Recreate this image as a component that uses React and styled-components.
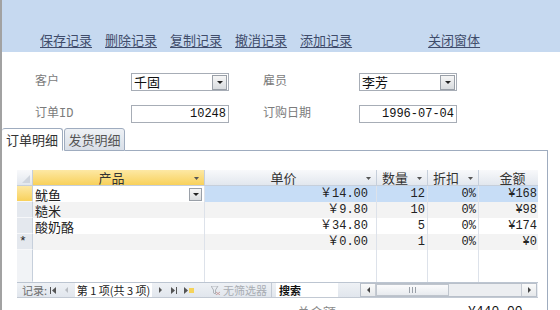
import React from 'react';
import styled, { createGlobalStyle } from 'styled-components';

const CJK = `"Noto Sans CJK SC", "Noto Sans", sans-serif`;
const MONO = `"Liberation Mono", "Noto Sans CJK SC", monospace`;

const GlobalStyle = createGlobalStyle`
  html, body { margin: 0; padding: 0; background: #fff; }
  body { font-family: ${CJK}; }
`;

const Page = styled.div`
  width: 560px;
  height: 310px;
  overflow: hidden;
  box-sizing: border-box;
  border-left: 2px solid #a2a2a2;
  display: flex;
  flex-direction: column;
`;

const Header = styled.div`
  flex: none;
  height: 52px;
  box-sizing: border-box;
  background: #c6d9f0;
  display: flex;
  align-items: flex-end;
  gap: 13px;
  padding: 0 0 4px 38px;
`;

const HeaderLink = styled.a`
  font-family: ${CJK};
  font-size: 13px;
  line-height: 16px;
  color: #3f4c6b;
  text-decoration: underline;
  text-underline-offset: 2px;
  margin-left: ${(p) => (p.$push ? '63px' : '0')};
  cursor: pointer;
`;

const Form = styled.div`
  display: grid;
  grid-template-columns: 96px 132px 96px 98px;
  grid-auto-rows: 18px;
  row-gap: 14px;
  align-items: center;
  padding: 21px 0 0 33px;
`;

const Label = styled.div`
  font-family: ${MONO};
  font-size: 12px;
  line-height: 16px;
  color: #7b7b7b;
`;

const Field = styled.div`
  width: 98px;
  height: 18px;
  box-sizing: border-box;
  border: 1px solid #a7adb6;
  background: #fff;
  display: flex;
  align-items: center;
  justify-content: ${(p) => (p.$right ? 'flex-end' : 'space-between')};
  padding: ${(p) => (p.$right ? '0 2px 0 0' : '0 0 0 2px')};
  font-family: ${(p) => (p.$right ? MONO : CJK)};
  font-size: ${(p) => (p.$right ? '12px' : '13px')};
  line-height: 16px;
  color: #111;
`;

const DropBtn = styled.span`
  width: 15px;
  height: 15px;
  box-sizing: border-box;
  margin-right: 1px;
  border: 1px solid #9aa0a8;
  background: linear-gradient(#f6f6f6, #d9dcdf);
  display: flex;
  align-items: center;
  justify-content: center;
`;

const TabStrip = styled.div`
  display: flex;
  align-items: flex-end;
  width: 546px;
  height: 23px;
  margin-top: 5px;
  flex: none;
`;

const Tab = styled.div`
  box-sizing: border-box;
  width: 61px;
  height: 23px;
  padding-top: 1px;
  border: 1px solid #9facbf;
  border-bottom: 1px solid ${(p) => (p.$active ? '#fff' : '#9facbf')};
  border-left: ${(p) => (p.$active ? 'none' : '1px solid #9facbf')};
  border-radius: 3px 3px 0 0;
  background: ${(p) => (p.$active ? '#fff' : 'linear-gradient(#eef1f5, #d9dfe8)')};
  font-family: ${CJK};
  font-size: 13px;
  line-height: 19px;
  color: ${(p) => (p.$active ? '#333' : '#555')};
  text-align: center;
  margin-right: ${(p) => (p.$active ? '1px' : '0')};
`;

const TabLine = styled.div`
  flex: 1;
  border-bottom: 1px solid #9facbf;
`;

const Panel = styled.div`
  flex: 1;
  width: 546px;
  box-sizing: border-box;
  border-right: 1px solid #9facbf;
  padding: 19px 0 0 15px;
`;

const Sheet = styled.div`
  width: 521px;
  overflow: hidden;
  display: flex;
  flex-direction: column;
`;

const Row = styled.div`
  display: grid;
  grid-template-columns: 16px 172px 172px 51px 51px 60px;
  width: 522px;
  height: ${(p) => p.$h || 16}px;
`;

const HeadCell = styled.div`
  position: relative;
  box-sizing: border-box;
  border-right: 1px solid #c6cfdb;
  border-bottom: 1px solid #c6cfdb;
  background: ${(p) =>
    p.$sel ? 'linear-gradient(#fde8a4, #f8d15b)' : 'linear-gradient(#f8f9fb, #e2e7ee)'};
  display: flex;
  align-items: center;
  justify-content: center;
  padding: 0 ${(p) => (p.$noArrow ? '0' : '14px')} 0 ${(p) => p.$pl || 0}px;
  font-family: ${CJK};
  font-size: 13px;
  line-height: 15px;
  color: #333;
  overflow: hidden;
`;

const SortArrow = styled.svg`
  position: absolute;
  right: 5px;
  top: 7px;
`;

const Selector = styled.div`
  box-sizing: border-box;
  border-right: 1px solid #c6cfdb;
  border-bottom: 1px solid ${(p) => (p.$blank ? 'transparent' : '#f6f7f9')};
  background: ${(p) =>
    p.$current ? 'linear-gradient(#fde8a4, #f8d15b)' : p.$blank ? '#f1f3f6' : '#e4e8ee'};
  font-family: ${MONO};
  font-size: 13px;
  line-height: 15px;
  color: #222;
  padding-left: 2px;
`;

const Cell = styled.div`
  box-sizing: border-box;
  border-right: 1px solid #dde2ea;
  background: ${(p) => p.$bg || '#fff'};
  display: flex;
  align-items: center;
  justify-content: ${(p) => (p.$num ? 'flex-end' : 'space-between')};
  padding: 0 ${(p) => (p.$pr !== undefined ? p.$pr : 2)}px 0 2px;
  font-family: ${(p) => (p.$num ? MONO : CJK)};
  font-size: ${(p) => (p.$num ? '12px' : '13px')};
  line-height: 15px;
  color: #222;
  white-space: nowrap;
  overflow: hidden;
`;

const CellDrop = styled.span`
  width: 13px;
  height: 13px;
  box-sizing: border-box;
  border: 1px solid #9aa0a8;
  background: linear-gradient(#f6f6f6, #d9dcdf);
  display: flex;
  align-items: center;
  justify-content: center;
`;

const NavBar = styled.div`
  display: flex;
  align-items: center;
  width: 521px;
  height: 16px;
  box-sizing: border-box;
  border-top: 1px solid #bcc5d1;
  border-bottom: 1px solid #c2c9d3;
  background: linear-gradient(#eef1f5, #e1e6ed);
  font-family: ${CJK};
  font-size: 11px;
  line-height: 14px;
  color: #6e6e6e;
`;

const NavLabel = styled.span`
  width: 31px;
  padding-left: 5px;
  box-sizing: border-box;
  white-space: nowrap;
  flex: none;
`;

const NavBtn = styled.span`
  width: ${(p) => p.$w}px;
  display: flex;
  justify-content: center;
  align-items: center;
  flex: none;
`;

const RecordBox = styled.span`
  width: 77px;
  height: 14px;
  background: #fff;
  color: #222;
  font-size: 11px;
  line-height: 14px;
  text-align: center;
  white-space: nowrap;
  flex: none;
`;

const FilterBox = styled.span`
  width: 67px;
  margin-left: 7px;
  height: 14px;
  display: flex;
  align-items: center;
  gap: 3px;
  padding-left: 6px;
  box-sizing: border-box;
  color: #a9adb3;
  border-right: 1px solid #c3cad4;
  white-space: nowrap;
  flex: none;
`;

const SearchBox = styled.span`
  width: 62px;
  margin-left: 4px;
  height: 14px;
  background: #fff;
  color: #111;
  font-weight: 700;
  padding-left: 3px;
  box-sizing: border-box;
  line-height: 14px;
  flex: none;
`;

const SearchGap = styled.span`
  width: 22px;
  flex: none;
`;

const Scroll = styled.div`
  width: 177px;
  height: 14px;
  box-sizing: border-box;
  border: 1px solid #b9c0ca;
  background: #eceef1;
  display: flex;
  flex: none;
`;

const ScrollBtn = styled.span`
  width: 15px;
  box-sizing: border-box;
  border-right: ${(p) => (p.$left ? '1px solid #c5cad2' : 'none')};
  border-left: ${(p) => (p.$left ? 'none' : '1px solid #c5cad2')};
  background: linear-gradient(#fafafa, #e6e8eb);
  display: flex;
  align-items: center;
  justify-content: center;
  margin-left: ${(p) => (p.$left ? '0' : 'auto')};
`;

const Thumb = styled.span`
  width: 73px;
  box-sizing: border-box;
  border: 1px solid #bfc5cd;
  background: linear-gradient(#fbfbfc, #e8ebef);
  display: flex;
  align-items: center;
  justify-content: center;
`;

const Totals = styled.div`
  display: flex;
  margin-top: 6px;
  padding-left: 280px;
  line-height: 16px;
`;

const TotalLabel = styled.span`
  width: 171px;
  font-family: ${CJK};
  font-size: 13px;
  color: #8a8a8a;
`;

const TotalValue = styled.span`
  font-family: ${MONO};
  font-size: 13px;
  color: #111;
`;

const ComboText = styled.span`
  font-family: ${CJK};
  font-size: 13px;
`;

const Tri = ({ dir = 'down', color = '#222', size = 4 }) => {
  const s = size;
  const pts =
    dir === 'down'
      ? `0,0 ${s * 2},0 ${s},${s}`
      : dir === 'left'
      ? `${s},0 ${s},${s * 2} 0,${s}`
      : `0,0 0,${s * 2} ${s},${s}`;
  const w = dir === 'down' ? s * 2 : s;
  const h = dir === 'down' ? s : s * 2;
  return (
    <svg width={w} height={h} viewBox={`0 0 ${w} ${h}`}>
      <polygon points={pts} fill={color} />
    </svg>
  );
};

const Arrow = () => (
  <SortArrow width="5" height="3" viewBox="0 0 5 3">
    <polygon points="0,0 5,0 2.5,3" fill="#555" />
  </SortArrow>
);

const products = [
  { name: '鱿鱼', price: '￥14.00', qty: '12', disc: '0%', amt: '¥168' },
  { name: '糙米', price: '￥9.80', qty: '10', disc: '0%', amt: '¥98' },
  { name: '酸奶酪', price: '￥34.80', qty: '5', disc: '0%', amt: '¥174' },
];

export default function App() {
  return (
    <>
      <GlobalStyle />
      <Page>
        <Header>
          <HeaderLink>保存记录</HeaderLink>
          <HeaderLink>删除记录</HeaderLink>
          <HeaderLink>复制记录</HeaderLink>
          <HeaderLink>撤消记录</HeaderLink>
          <HeaderLink>添加记录</HeaderLink>
          <HeaderLink $push>关闭窗体</HeaderLink>
        </Header>

        <Form>
          <Label>客户</Label>
          <Field>
            <ComboText>千固</ComboText>
            <DropBtn>
              <Tri size={3} />
            </DropBtn>
          </Field>
          <Label>雇员</Label>
          <Field>
            <ComboText>李芳</ComboText>
            <DropBtn>
              <Tri size={3} />
            </DropBtn>
          </Field>
          <Label>订单ID</Label>
          <Field $right>10248</Field>
          <Label>订购日期</Label>
          <Field $right>1996-07-04</Field>
        </Form>

        <TabStrip>
          <Tab $active>订单明细</Tab>
          <Tab>发货明细</Tab>
          <TabLine />
        </TabStrip>

        <Panel>
          <Sheet>
            <Row>
              <HeadCell $noArrow>
                <svg width="8" height="8" viewBox="0 0 8 8" style={{ position: 'absolute', right: 2, bottom: 2 }}>
                  <polygon points="8,0 8,8 0,8" fill="#cfd5de" />
                </svg>
              </HeadCell>
              <HeadCell $sel>
                产品
                <Arrow />
              </HeadCell>
              <HeadCell>
                单价
                <Arrow />
              </HeadCell>
              <HeadCell>
                数量
                <Arrow />
              </HeadCell>
              <HeadCell>
                折扣
                <Arrow />
              </HeadCell>
              <HeadCell $noArrow $pl={8}>
                金额
              </HeadCell>
            </Row>

            {products.map((p, i) => {
              const current = i === 0;
              const bg = current ? '#c7ddf6' : i % 2 === 1 ? '#f3f3f3' : '#ffffff';
              return (
                <Row key={p.name}>
                  <Selector $current={current} />
                  <Cell $bg={current ? '#fff' : bg}>
                    {p.name}
                    {current && (
                      <CellDrop>
                        <Tri size={3} />
                      </CellDrop>
                    )}
                  </Cell>
                  <Cell $num $bg={bg} $pr={8}>
                    {p.price}
                  </Cell>
                  <Cell $num $bg={bg}>
                    {p.qty}
                  </Cell>
                  <Cell $num $bg={bg}>
                    {p.disc}
                  </Cell>
                  <Cell $num $bg={bg} $pr={1}>
                    {p.amt}
                  </Cell>
                </Row>
              );
            })}

            <Row>
              <Selector>*</Selector>
              <Cell $bg="#f3f3f3" />
              <Cell $num $bg="#f3f3f3" $pr={8}>
                ￥0.00
              </Cell>
              <Cell $num $bg="#f3f3f3">
                1
              </Cell>
              <Cell $num $bg="#f3f3f3">
                0%
              </Cell>
              <Cell $num $bg="#f3f3f3" $pr={1}>
                ¥0
              </Cell>
            </Row>

            <Row $h={32}>
              <Selector $blank />
              <Cell />
              <Cell />
              <Cell />
              <Cell />
              <Cell />
            </Row>

            <NavBar>
              <NavLabel>记录:</NavLabel>
              <NavBtn $w={10}>
                <svg width="6" height="7" viewBox="0 0 6 7">
                  <rect x="0" y="0" width="1" height="7" fill="#555" />
                  <polygon points="6,0 6,7 2,3.5" fill="#555" />
                </svg>
              </NavBtn>
              <NavBtn $w={17}>
                <Tri dir="left" size={3} color="#b8bcc2" />
              </NavBtn>
              <RecordBox>第 1 项(共 3 项)</RecordBox>
              <NavBtn $w={16}>
                <Tri dir="right" size={3} color="#555" />
              </NavBtn>
              <NavBtn $w={12}>
                <svg width="6" height="7" viewBox="0 0 6 7">
                  <polygon points="0,0 0,7 4,3.5" fill="#555" />
                  <rect x="5" y="0" width="1" height="7" fill="#555" />
                </svg>
              </NavBtn>
              <NavBtn $w={18}>
                <svg width="10" height="7" viewBox="0 0 10 7">
                  <polygon points="0,0 0,7 4,3.5" fill="#555" />
                  <rect x="5" y="1" width="5" height="5" fill="#f5d35a" />
                </svg>
              </NavBtn>
              <FilterBox>
                <svg width="9" height="9" viewBox="0 0 9 9">
                  <polygon points="0,0 7,0 4.5,4 4.5,8 2.5,7 2.5,4" fill="none" stroke="#b0b4ba" strokeWidth="1" />
                  <line x1="5" y1="6" x2="9" y2="9" stroke="#c9a0a0" strokeWidth="1" />
                  <line x1="9" y1="6" x2="5" y2="9" stroke="#c9a0a0" strokeWidth="1" />
                </svg>
                无筛选器
              </FilterBox>
              <SearchBox>搜索</SearchBox>
              <SearchGap />
              <Scroll>
                <ScrollBtn $left>
                  <Tri dir="left" size={3} color="#444" />
                </ScrollBtn>
                <Thumb>
                  <svg width="7" height="6" viewBox="0 0 7 6">
                    <rect x="0" y="0" width="1" height="6" fill="#9aa0a8" />
                    <rect x="3" y="0" width="1" height="6" fill="#9aa0a8" />
                    <rect x="6" y="0" width="1" height="6" fill="#9aa0a8" />
                  </svg>
                </Thumb>
                <ScrollBtn>
                  <Tri dir="right" size={3} color="#444" />
                </ScrollBtn>
              </Scroll>
            </NavBar>
          </Sheet>

          <Totals>
            <TotalLabel>总金额:</TotalLabel>
            <TotalValue>¥440.00</TotalValue>
          </Totals>
        </Panel>
      </Page>
    </>
  );
}
